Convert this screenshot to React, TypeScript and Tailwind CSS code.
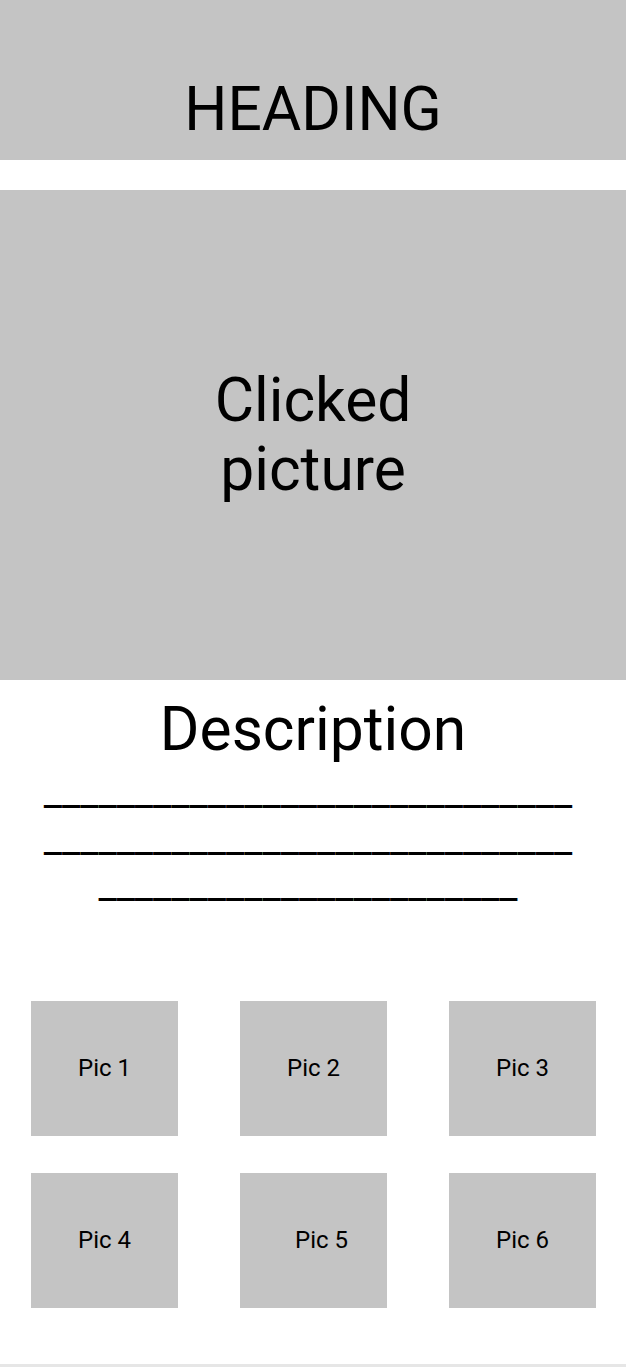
export default function App() {
  const pics = ["Pic 1", "Pic 2", "Pic 3", "Pic 4", "Pic 5", "Pic 6"];
  return (
    <div className="w-[626px] h-[1367px] bg-white flex flex-col text-black" style={{ fontFamily: 'Roboto, "Liberation Sans", sans-serif' }}>
      <header className="h-[160px] shrink-0 bg-[#c4c4c4] flex justify-center pt-[75px]">
        <h1 className="text-[60.5px] leading-[70px] font-normal">HEADING</h1>
      </header>
      <section className="mt-[30px] h-[490px] shrink-0 bg-[#c4c4c4] flex items-center justify-center">
        <p className="text-[60.5px] leading-[69px] text-center">
          Clicked
          <br />
          picture
        </p>
      </section>
      <section className="pt-[15px] flex flex-col items-center">
        <h2 className="text-[60.5px] leading-[70px] font-normal">Description</h2>
        <div className="mt-[4px] pr-[10px] text-[40.4px] leading-[46.5px] text-center whitespace-nowrap">
          <div>_____________________________</div>
          <div>_____________________________</div>
          <div>_______________________</div>
        </div>
      </section>
      <section className="mt-[92px] px-[31px] grid grid-cols-[147px_147px_147px] gap-x-[62px] gap-y-[37px]">
        {pics.map((p, i) => (
          <div
            key={p}
            className={
              i === 4
                ? "h-[135px] bg-[#c4c4c4] flex items-center justify-center pl-[16px] text-[24px] leading-[28px]"
                : "h-[135px] bg-[#c4c4c4] flex items-center justify-center text-[24px] leading-[28px]"
            }
          >
            {p}
          </div>
        ))}
      </section>
      <div className="mt-auto h-[3px] bg-[#e6e6e6]" />
    </div>
  );
}
